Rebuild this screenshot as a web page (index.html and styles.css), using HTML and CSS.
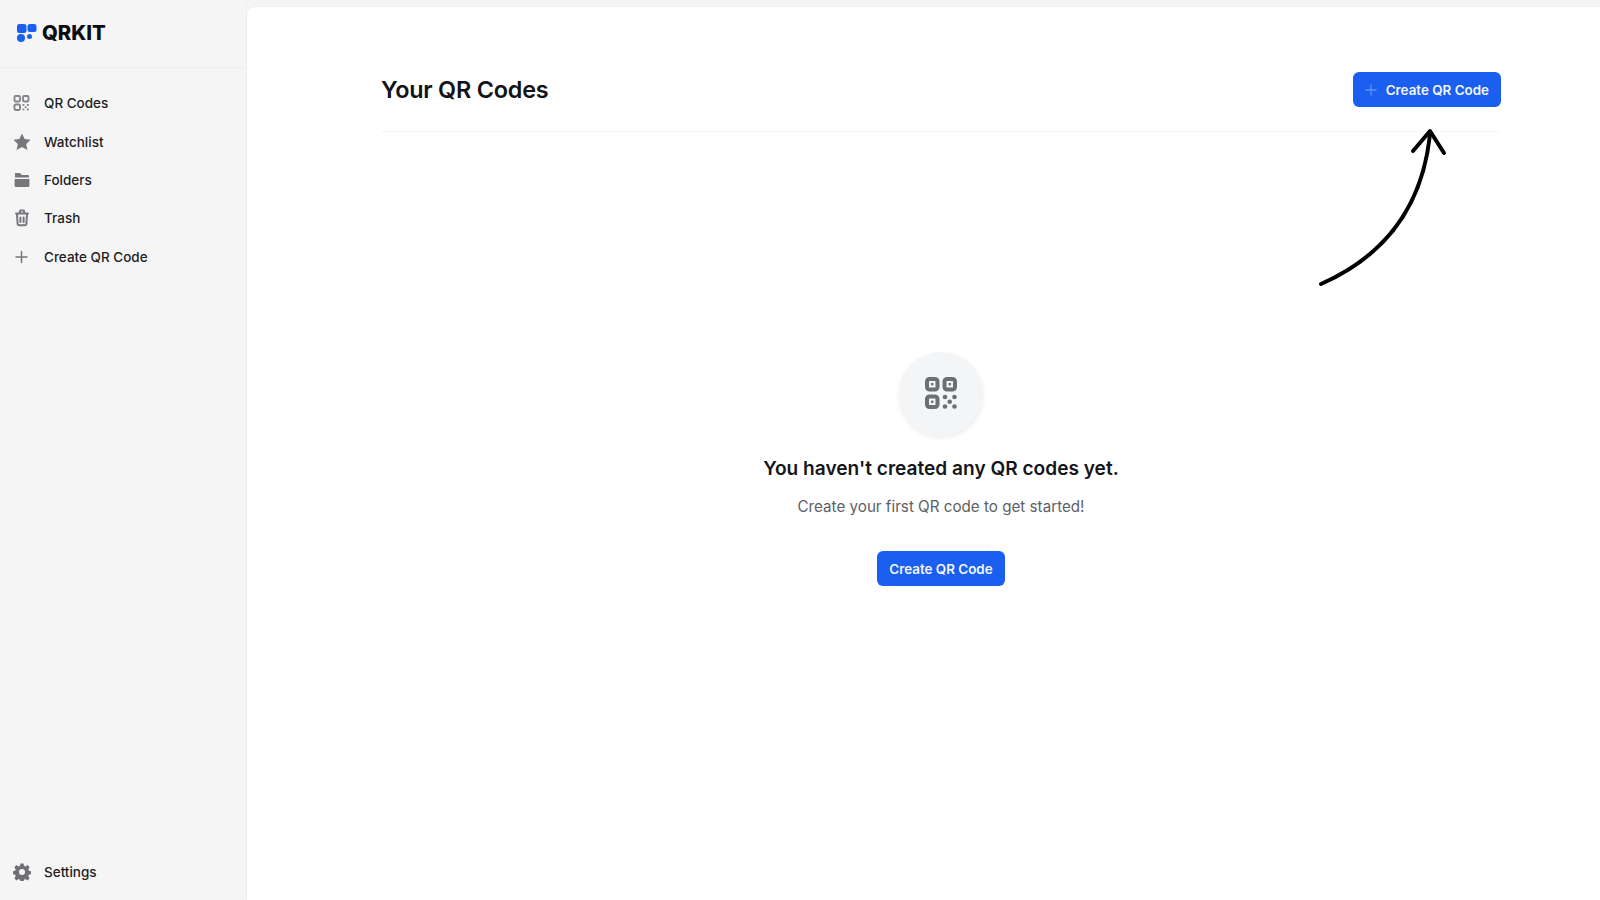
FILE: index.html
```html
<!DOCTYPE html>
<html lang="en">
<head>
<meta charset="utf-8">
<title>QRKit</title>
<link rel="stylesheet" href="styles.css">
</head>
<body>
<aside class="sidebar">
  <div class="brand">
    <svg class="brand-mark" viewBox="0 0 20 18" width="20" height="18"><g fill="#1a5ff0"><rect x="0" y="0" width="9.500" height="9" rx="2.500"/><rect x="10.500" y="0" width="9" height="8" rx="2.500"/><rect x="0" y="10" width="8" height="8" rx="4"/><circle cx="12.500" cy="12.500" r="2.500"/></g></svg>
    <span class="brand-name">QRKIT</span>
  </div>
  <nav class="nav">
    <a class="nav-item"><svg class="nav-icon" viewBox="0 0 18 18"><g fill="none" stroke="#85858a" stroke-width="1.900"><rect x="1.500" y="2" width="5.500" height="5.500" rx="1.200"/><rect x="10" y="2" width="5.500" height="5.500" rx="1.200"/><rect x="1.500" y="10.500" width="5.500" height="5.500" rx="1.200"/></g><g fill="#85858a"><rect x="9.500" y="10" width="1.800" height="1.800"/><rect x="14" y="10" width="1.800" height="1.800"/><rect x="11.800" y="12.300" width="1.800" height="1.800"/><rect x="9.500" y="14.600" width="1.800" height="1.800"/><rect x="14" y="14.600" width="1.800" height="1.800"/></g></svg>QR Codes</a>
    <a class="nav-item"><svg class="nav-icon" viewBox="0 0 18 18"><path fill="#77777c" d="M9 .4l2.600 5.600 6 .7-4.400 4.200 1.200 6.100L9 14l-5.400 3 1.200-6.100L.4 6.700l6-.7z"/></svg>Watchlist</a>
    <a class="nav-item"><svg class="nav-icon" viewBox="0 0 18 18"><path fill="#77777c" d="M2 2h5l1.800 2h6.200a1 1 0 0 1 1 1v1.600H2z"/><path fill="#77777c" d="M1.600 8h14.800v6.500a1.500 1.500 0 0 1-1.500 1.500H3.100a1.500 1.500 0 0 1-1.500-1.500z"/></svg>Folders</a>
    <a class="nav-item"><svg class="nav-icon" viewBox="0 0 18 18"><g fill="none" stroke="#77777c" stroke-width="2" stroke-linecap="round" stroke-linejoin="round"><path d="M3 4.500h12"/><path d="M6.800 4V2.400a1 1 0 0 1 1-1h2.400a1 1 0 0 1 1 1V4"/><path d="M4 5l.6 9.800a1.600 1.600 0 0 0 1.600 1.400h5.600a1.600 1.600 0 0 0 1.600-1.400L14 5"/><path d="M7.400 8.500v4.500M10.600 8.500v4.500"/></g></svg>Trash</a>
    <a class="nav-item"><svg class="nav-icon" viewBox="0 0 18 18"><path fill="none" stroke="#77777c" stroke-width="1.500" stroke-linecap="round" d="M8.500 3.500v11M3 9h11"/></svg>Create QR Code</a>
  </nav>
  <a class="nav-item settings"><svg class="nav-icon" viewBox="0 0 24 24"><path fill="#6f6f74" fill-rule="evenodd" d="M10 .5h4l.7 3.300 1.900.8 2.800-1.800 2.800 2.800-1.800 2.800.8 1.900 3.300.7v4l-3.300.7-.8 1.900 1.800 2.800-2.800 2.800-2.800-1.800-1.900.8-.7 3.300h-4l-.7-3.300-1.900-.8-2.800 1.800-2.800-2.800 1.800-2.800-.8-1.900-3.300-.7v-4l3.300-.7.8-1.900-1.800-2.800 2.800-2.800 2.800 1.800 1.900-.8zM12 8a4 4 0 1 0 0 8 4 4 0 0 0 0-8z"/></svg>Settings</a>
</aside>
<main class="main">
  <header class="page-head">
    <h1 class="page-title">Your QR Codes</h1>
    <button class="btn btn-icon"><svg class="btn-plus" viewBox="0 0 12 12" width="12" height="12"><path fill="none" stroke="#5e93f8" stroke-width="1.300" stroke-linecap="round" d="M6 1v10M1 6h10"/></svg>Create QR Code</button>
  </header>
  <section class="empty">
    <div class="empty-badge">
      <svg viewBox="0 0 32 32" width="32" height="32"><g fill="none" stroke="#6d6f75" stroke-width="4"><rect x="2" y="2" width="10.500" height="10.500" rx="2.500"/><rect x="19.500" y="2" width="10.500" height="10.500" rx="2.500"/><rect x="2" y="19.500" width="10.500" height="10.500" rx="2.500"/></g><g fill="#6d6f75"><rect x="6" y="6" width="2.400" height="2.400"/><rect x="23.600" y="6" width="2.400" height="2.400"/><rect x="6" y="23.600" width="2.400" height="2.400"/><circle cx="20" cy="20" r="2.300"/><circle cx="29.500" cy="20" r="2.300"/><circle cx="24.700" cy="24.700" r="2.300"/><circle cx="20" cy="29.500" r="2.300"/><circle cx="29.500" cy="29.500" r="2.300"/></g></svg>
    </div>
    <h2 class="empty-title">You haven't created any QR codes yet.</h2>
    <p class="empty-text">Create your first QR code to get started!</p>
    <button class="btn">Create QR Code</button>
  </section>
  <svg class="arrow" viewBox="0 0 140 170" width="140" height="170"><g fill="none" stroke="#000" stroke-width="4" stroke-linecap="round" stroke-linejoin="round"><path d="M11 164C70 138 112 92 120 14"/><path d="M103 31L120 11L134 33"/></g></svg>
</main>
</body>
</html>
```
FILE: styles.css
```css
* { box-sizing: border-box; }
html, body { height: 100%; }
body {
  margin: 0;
  display: flex;
  height: 900px;
  overflow: hidden;
  background: #f5f5f6;
  font-family: Inter, "Liberation Sans", sans-serif;
  color: #131417;
}
.sidebar {
  width: 247px;
  flex: none;
  display: flex;
  flex-direction: column;
  background: #f5f5f6;
  border-right: 1px solid #f0f0f1;
}
.brand {
  height: 68px;
  padding: 0 0 2px 17px;
  display: flex;
  align-items: center;
  gap: 5px;
  border-bottom: 1px solid #eeeeef;
}
.brand-mark { display: block; }
.brand-name {
  font-size: 20.300px;
  font-weight: 800;
  color: #0c0d10;
}
.nav {
  flex: 1;
  display: flex;
  flex-direction: column;
  padding-top: 16px;
}
.nav-item {
  height: 38.400px;
  padding-left: 13px;
  display: flex;
  align-items: center;
  gap: 13px;
  font-size: 13.500px;
  font-weight: 500;
  color: #1d1e22;
}
.nav-icon { width: 18px; height: 18px; flex: none; }
.settings { margin-bottom: 9px; }
.main {
  flex: 1;
  position: relative;
  margin-top: 7px;
  padding: 0 99px 0 134px;
  background: #fff;
  border-top-left-radius: 8px;
  box-shadow: 0 0 3px rgba(0, 0, 0, 0.04);
}
.page-head {
  height: 125px;
  display: flex;
  align-items: center;
  justify-content: space-between;
  padding-top: 41px;
  border-bottom: 1px solid #f6f6f7;
}
.page-title {
  margin: 0;
  font-size: 23.400px;
  font-weight: 600;
  letter-spacing: -0.2px;
  color: #121317;
}
.btn {
  height: 35px;
  padding: 0 12px;
  display: inline-flex;
  align-items: center;
  gap: 9px;
  border: 0;
  border-radius: 6px;
  background: #1a5ff0;
  color: #f2f6ff;
  font: 600 13.400px Inter, "Liberation Sans", sans-serif;
}
.btn-plus { display: block; }
.empty {
  display: flex;
  flex-direction: column;
  align-items: center;
  padding-top: 220px;
}
.empty-badge {
  width: 84px;
  height: 84px;
  display: flex;
  align-items: center;
  justify-content: center;
  border-radius: 50%;
  background: #f4f5f6;
  box-shadow: 0 2px 5px rgba(0, 0, 0, 0.08);
}
.empty-badge svg { margin-bottom: 2px; }
.empty-title {
  margin: 17px 0 0;
  font-size: 19.100px;
  line-height: 30px;
  font-weight: 600;
  color: #15161a;
}
.empty-text {
  margin: 12px 0 0;
  font-size: 15.200px;
  line-height: 24px;
  color: #5d5f66;
}
.empty .btn { margin-top: 32px; }
.arrow {
  position: absolute;
  left: 1063px;
  top: 113px;
}
```
